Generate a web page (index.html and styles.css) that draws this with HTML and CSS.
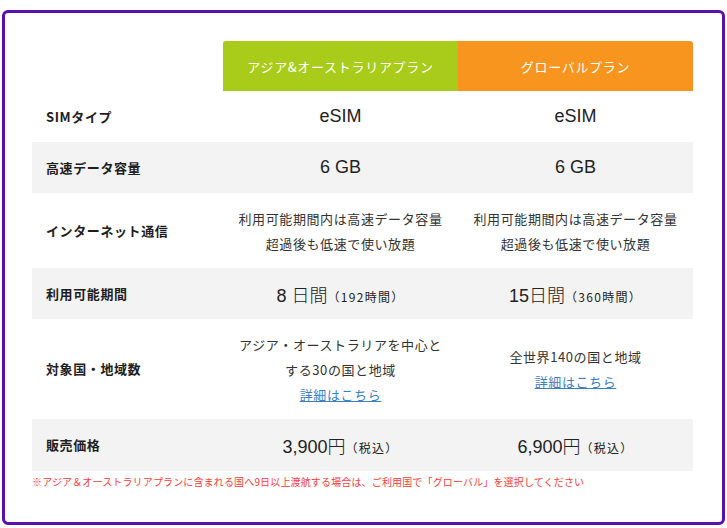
FILE: index.html
```html
<!DOCTYPE html>
<html lang="ja">
<head>
<meta charset="utf-8">
<link rel="stylesheet" href="styles.css">
</head>
<body>
<div class="box">
  <table class="plans">
    <colgroup>
      <col class="c-label">
      <col class="c-plan">
      <col class="c-plan">
    </colgroup>
    <thead>
      <tr class="head">
        <th class="blank"></th>
        <th class="plan asia">アジア&amp;オーストラリアプラン</th>
        <th class="plan global">グローバルプラン</th>
      </tr>
    </thead>
    <tbody>
      <tr class="r1">
        <th class="label">SIMタイプ</th>
        <td class="big">eSIM</td>
        <td class="big">eSIM</td>
      </tr>
      <tr class="r1 gray">
        <th class="label">高速データ容量</th>
        <td class="big">6 GB</td>
        <td class="big">6 GB</td>
      </tr>
      <tr class="r2">
        <th class="label">インターネット通信</th>
        <td class="small">利用可能期間内は高速データ容量<br>超過後も低速で使い放題</td>
        <td class="small">利用可能期間内は高速データ容量<br>超過後も低速で使い放題</td>
      </tr>
      <tr class="r1 gray">
        <th class="label">利用可能期間</th>
        <td class="big">8 <span class="jp">日間</span><span class="note">（192時間）</span></td>
        <td class="big">15<span class="jp">日間</span><span class="note">（360時間）</span></td>
      </tr>
      <tr class="r3">
        <th class="label">対象国・地域数</th>
        <td class="small">アジア・オーストラリアを中心と<br>する30の国と地域<br><a href="#" class="link">詳細はこちら</a></td>
        <td class="small">全世界140の国と地域<br><a href="#" class="link">詳細はこちら</a></td>
      </tr>
      <tr class="r1b gray">
        <th class="label">販売価格</th>
        <td class="big">3,900<span class="jp">円</span><span class="note">（税込）</span></td>
        <td class="big">6,900<span class="jp">円</span><span class="note">（税込）</span></td>
      </tr>
    </tbody>
  </table>
  <p class="footnote">※アジア＆オーストラリアプランに含まれる国へ9日以上渡航する場合は、ご利用国で「グローバル」を選択してください</p>
</div>
</body>
</html>
```

FILE: styles.css
```css
html, body {
  margin: 0;
  padding: 0;
  background: #ffffff;
}

body {
  font-family: "Noto Sans CJK JP", "Noto Sans", sans-serif;
  color: #222222;
}

.box {
  box-sizing: border-box;
  margin: 10px 0 0 2px;
  width: 723px;
  height: 515px;
  border: 3px solid #5a10ad;
  border-radius: 6px;
  padding: 28px 0 0 27px;
}

.plans {
  border-collapse: collapse;
  border-spacing: 0;
  width: 660px;
  table-layout: fixed;
}

.c-label { width: 191px; }
.c-plan { width: 235px; }

.plans th,
.plans td {
  padding: 0;
  vertical-align: middle;
}

.head th {
  height: 50px;
}

.plan {
  color: #ffffff;
  font-weight: normal;
  font-size: 13px;
  letter-spacing: 0.7px;
  text-align: center;
}

.asia {
  background: #a9cb19;
  border-top-left-radius: 3px;
}

.global {
  background: #f7951e;
  border-top-right-radius: 3px;
}

.r1 th, .r1 td { height: 51px; }
.r1b th, .r1b td { height: 52px; }
.r2 th, .r2 td { height: 75px; }
.r3 th, .r3 td { height: 100px; }

.gray th, .gray td {
  background: #f3f3f3;
}

.label {
  text-align: left;
  padding-left: 14px !important;
  font-size: 13px;
  line-height: 16px;
  letter-spacing: 0.6px;
  font-weight: bold;
  color: #1e1e1e;
}

.big {
  text-align: center;
  font-family: "Liberation Sans", "Noto Sans CJK JP", sans-serif;
  font-size: 18px;
  color: #222222;
}

.big .jp {
  font-family: "Noto Sans CJK JP", sans-serif;
  font-weight: 300;
  font-size: 18px;
}

.big .note {
  font-size: 12px;
  letter-spacing: 1.3px;
  font-family: "Noto Sans CJK JP", sans-serif;
}

.small {
  text-align: center;
  font-size: 13px;
  letter-spacing: 0.6px;
  line-height: 25px;
  color: #333333;
}

.link {
  color: #3d7fc6;
  text-decoration: underline;
}

.footnote {
  margin: 4px 0 0 0;
  font-size: 10px;
  letter-spacing: 0.15px;
  line-height: 14px;
  color: #ff3b3b;
}
```
